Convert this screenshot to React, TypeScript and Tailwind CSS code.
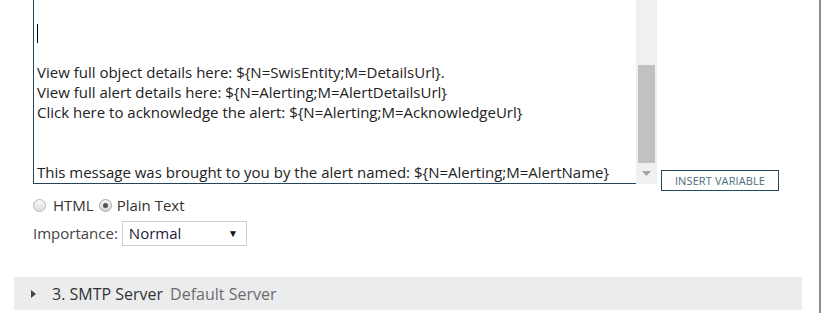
export default function App() {
  const lines = [
    "Alert: ${N=SwisEntity;M=Caption} (${N=SwisEntity;M=Type}) is currently in a warning state.",
    "",
    "",
    "",
    "View full object details here: ${N=SwisEntity;M=DetailsUrl}.",
    "View full alert details here: ${N=Alerting;M=AlertDetailsUrl}",
    "Click here to acknowledge the alert: ${N=Alerting;M=AcknowledgeUrl}",
    "",
    "",
    "This message was brought to you by the alert named: ${N=Alerting;M=AlertName}",
  ];

  return (
    <div className="flex h-[313px] w-[821px] bg-white font-['Open_Sans',sans-serif] text-[15px] text-[#222]">
      <main className="flex-1">
        <div className="flex items-end pl-[33px]">
          <div className="flex h-[184px] w-[624px]">
            <div className="relative w-[603px] overflow-hidden border-b border-l border-[#23445a]">
              <div className="mt-[-21px] pl-[3px]">
                {lines.map((l, i) => (
                  <div key={i} className={`${i === 0 ? "h-[23px]" : "h-[20px]"} whitespace-nowrap leading-[20px]`}>
                    {l}
                    {i === 2 && <span className="inline-block h-[19px] w-px bg-black align-middle" />}
                  </div>
                ))}
              </div>
            </div>
            <div className="flex w-[21px] flex-col bg-[#f0f0f0] px-[2px]">
              <div className="h-[65px]" />
              <div className="h-[98px] bg-[#c1c1c1]" />
              <div className="flex flex-1 items-center justify-center">
                <svg width="9" height="5" viewBox="0 0 9 5">
                  <path d="M0 0h9L4.5 5z" fill="#a3a3a3" />
                </svg>
              </div>
            </div>
          </div>
          <button className="mb-[-7px] ml-[4px] h-[21px] w-[118px] border-[1.5px] border-[#1f4a5f] text-[11px] leading-none tracking-[0.01em] text-[#4b6b7c]">
            INSERT VARIABLE
          </button>
        </div>

        <div className="mt-[11px] flex h-[20px] items-center pl-[33px] text-[#333]">
          <span className="h-[13px] w-[13px] rounded-full border border-[#b5b5b5] bg-gradient-to-b from-[#fbfbfb] to-[#dcdcdc]" />
          <span className="ml-[7px]">HTML</span>
          <span className="ml-[5px] flex h-[13px] w-[13px] items-center justify-center rounded-full border border-[#a9a9a9] bg-gradient-to-b from-[#f4f4f4] to-[#d6d6d6]">
            <span className="h-[5px] w-[5px] rounded-full bg-[#555]" />
          </span>
          <span className="ml-[5px]">Plain Text</span>
        </div>

        <div className="mt-[6px] flex items-center pl-[33px]">
          <span className="text-[#444]">Importance:</span>
          <div className="ml-[4px] flex h-[25px] w-[125px] items-center justify-between border border-[#cfcfcf] pl-[6px] pr-[8px]">
            <span className="text-[#1c1c3a]">Normal</span>
            <span className="text-[10px] text-[#111]">▼</span>
          </div>
        </div>

        <div className="ml-[14px] mt-[31px] flex h-[33px] w-[788px] items-center bg-[#ebecee] pl-[17px] text-[16px]">
          <svg width="5" height="8" viewBox="0 0 5 8" className="mr-[16px]">
            <path d="M0 0l5 4-5 4z" fill="#444" />
          </svg>
          <span className="text-[#333]">3. SMTP Server</span>
          <span className="ml-[7px] text-[#6b6b6b]">Default Server</span>
        </div>
      </main>
      <div className="w-[2px] bg-[#8c8c8c]" />
    </div>
  );
}
